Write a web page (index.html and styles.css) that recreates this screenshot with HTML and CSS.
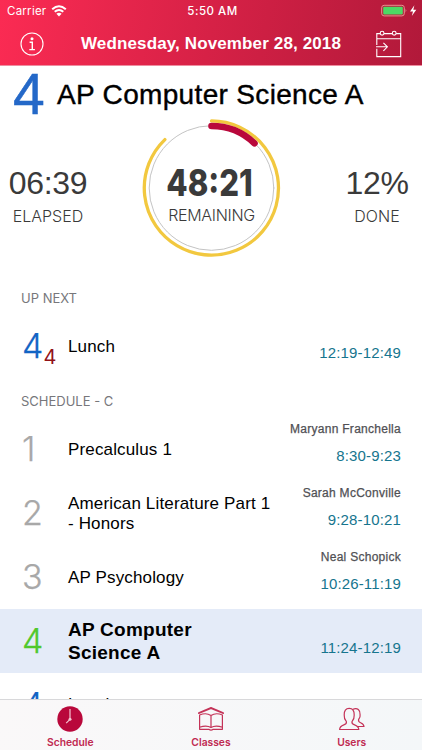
FILE: index.html
```
<!DOCTYPE html>
<html lang="en">
<head>
<meta charset="utf-8">
<title>Schedule</title>
<link rel="stylesheet" href="styles.css">
</head>
<body>
<div class="app">
  <header class="header">
    <div class="status">
      <div class="carrier"><span>Carrier</span>
        <svg width="16" height="12" viewBox="0 0 16 12" fill="none" stroke="#fff" stroke-width="2"><path d="M1.2 4.2Q8-1.8 14.8 4.2M3.7 6.8Q8 3.1 12.3 6.8"/><path d="M5.4 8.7Q8 6.6 10.6 8.7L8 11.4Z" fill="#fff" stroke="none"/></svg>
      </div>
      <div class="clock">5:50 AM</div>
      <div class="battery">
        <svg width="40" height="14" viewBox="0 0 40 14"><rect x=".7" y="1.3" width="22.6" height="10.6" rx="2.4" fill="none" stroke="#e5938f"/><rect x="2.2" y="2.8" width="19.6" height="7.6" rx="1" fill="#4cd964"/><path d="M24.6 4.8q1.6 1.8 0 3.6z" fill="#e5938f"/><path d="M33.4 1.2L29 7.4h3L30.8 12 35.3 5.8h-3z" fill="#fff"/></svg>
      </div>
    </div>
    <div class="nav">
      <svg width="24" height="24" viewBox="0 0 24 24" fill="none" stroke="#fff"><circle cx="12" cy="12" r="11" stroke-width="1.1"/><circle cx="12" cy="6.8" r="1.5" fill="#fff" stroke="none"/><path d="M9.6 10.2h2.7v7.3M9.3 17.6h5.6" stroke-width="1.4"/></svg>
      <h1>Wednesday, November 28, 2018</h1>
      <svg width="28" height="28" viewBox="0 0 28 28" fill="none" stroke="#fff" stroke-width="1.1"><path d="M1.8 15V3.6h3.4M9 3.6h8.3M21.1 3.6h4.6v23H1.8v-7.8M1.8 8.8h23.9"/><circle cx="7.1" cy="3.2" r="1.9"/><circle cx="19.2" cy="3.2" r="1.9"/><path d="M1 16.8h11M8.4 12.8l4 4-4 4"/></svg>
    </div>
  </header>

  <section class="current">
    <div class="title"><span class="period">4</span><h2>AP Computer Science A</h2></div>
    <div class="stats">
      <div class="stat elapsed"><b>06:39</b><span>ELAPSED</span></div>
      <div class="ring">
        <svg width="140" height="140" viewBox="-69.5 -70 140 140" fill="none" stroke-linecap="round"><circle r="62.3" stroke="#c4c4c4"/><path d="M0-67.1A67.1 67.1 0 1 1-46.6-48.4" stroke="#f2c83f" stroke-width="3.3"/><path d="M0-62A62 62 0 0 1 43-44.7" stroke="#b9083b" stroke-width="6.6"/></svg>
        <div class="stat remaining"><b>48:21</b><span>REMAINING</span></div>
      </div>
      <div class="stat done"><b>12%</b><span>DONE</span></div>
    </div>
  </section>

  <main class="list">
    <h3 class="upnext">UP NEXT</h3>
    <div class="row next"><div class="num blue">4<sub>4</sub></div><div class="name">Lunch</div><div class="info"><time>12:19-12:49</time></div></div>
    <h3 class="sched">SCHEDULE - C</h3>
    <div class="row"><div class="num">1</div><div class="name">Precalculus 1</div><div class="info"><span>Maryann Franchella</span><time>8:30-9:23</time></div></div>
    <div class="row"><div class="num">2</div><div class="name">American Literature Part 1<br>- Honors</div><div class="info"><span>Sarah McConville</span><time>9:28-10:21</time></div></div>
    <div class="row"><div class="num">3</div><div class="name">AP Psychology</div><div class="info"><span>Neal Schopick</span><time>10:26-11:19</time></div></div>
    <div class="row active"><div class="num green">4</div><div class="name">AP Computer<br>Science A</div><div class="info"><time>11:24-12:19</time></div></div>
    <div class="row last"><div class="num blue">4</div><div class="name">Lunch</div></div>
  </main>

  <nav class="tabs">
    <div class="tab"><svg width="28" height="28" viewBox="0 0 28 28"><circle cx="14" cy="14" r="12.7" fill="#b9083b"/><path d="M14 4v10.3l-3.8 3.8" fill="none" stroke="#f3c4d0" stroke-width="1.2"/><circle cx="14" cy="14.2" r="1.5" fill="#f3c4d0"/></svg><span>Schedule</span></div>
    <div class="tab"><svg width="28" height="28" viewBox="0 0 28 28" fill="none" stroke="#c43358" stroke-width="1.2" stroke-linejoin="round"><path d="M1.7 9V7.9L14 2.6l12.3 5.3V9M1.7 8.5L14 3.5l12.3 5M14 10.5C11 8.5 6 8.6 2.6 10v14.3h9.2q2.2 1.5 4.4 0h9.2V10C22 8.6 17 8.5 14 10.5zM14 10.5v12M2.6 22.2c4-1.4 8.8-1.4 11.4.4 2.6-1.8 7.4-1.8 11.4-.4"/></svg><span>Classes</span></div>
    <div class="tab"><svg width="28" height="28" viewBox="0 0 28 28" fill="none" stroke="#c43358" stroke-width="1.2" stroke-linejoin="round"><path d="M1.6 24.5c.2-3 1.8-3.7 4.2-4.6 2.4-.8 3-1.6 2.6-3.3C6.6 14.6 6 12.5 6.2 10c-.2-4.2 1.6-6.6 5-6.6s5.2 2.4 5 6.6c.2 2.5-.4 4.6-2.2 6.6-.4 1.7.2 2.5 2.6 3.3 2.4.9 4 1.6 4.2 4.6z"/><path d="M14.5 4.5c5-2.4 8 .8 7.6 5.3.3 1.7-.2 3.3-1.5 4.7-.4 1.7 0 2.5 2 3.2 2 .8 3.2 1.5 3.4 3.8h-6.4"/></svg><span>Users</span></div>
  </nav>
</div>
</body>
</html>
```
FILE: styles.css
```
* { box-sizing: border-box; }
body { margin: 0; background: #fff; font-family: "Liberation Sans", Arial, sans-serif; }
h1, h2, h3 { margin: 0; font-weight: 400; }
svg { display: block; flex: none; }
.app { width: 422px; height: 750px; overflow: hidden; display: flex; flex-direction: column; white-space: nowrap; }

.header { height: 66px; flex: none; color: #fff; background: linear-gradient(100deg, #fb2b53 0%, #d62146 50%, #b1193a 100%); border-bottom: 1px solid #ee8da0; }
.status { height: 22px; display: grid; grid-template-columns: 1fr auto 1fr; align-items: center; padding: 0 1px 0 7px; font: 11.5px/22px Inter, sans-serif; }
.carrier { display: flex; align-items: center; gap: 5px; letter-spacing: .25px; }
.clock { font-weight: 500; letter-spacing: .5px; margin-left: -3px; }
.battery { justify-self: end; }
.nav { height: 43px; display: flex; align-items: center; justify-content: space-between; padding: 0 19px 0 20px; }
.nav h1 { font-size: 17px; font-weight: 700; line-height: 43px; letter-spacing: .13px; padding-left: 3px; }

.current { height: 215px; flex: none; }
.title { display: flex; height: 55px; padding-left: 13px; }
.period { width: 44px; font-size: 57px; line-height: 57px; color: #2468c8; -webkit-text-stroke: .5px #2468c8; }
.title h2 { font-size: 28px; line-height: 57px; letter-spacing: .33px; -webkit-text-stroke: .4px #000; }
.stats { display: flex; justify-content: space-between; margin-top: -3px; height: 140px; }
.stat { display: flex; flex-direction: column; align-items: center; font-family: Inter, sans-serif; color: #3a3a3a; }
.stat b { font: 400 32px/38px "Liberation Sans", Arial, sans-serif; letter-spacing: -.3px; padding-bottom: 2px; }
.stat span { font-size: 16px; line-height: 24px; font-weight: 300; }
.elapsed, .done { width: 96px; padding-top: 46px; }
.done { width: 90px; }
.ring { width: 140px; display: grid; margin-left: -5px; }
.ring > * { grid-area: 1 / 1; }
.remaining { padding-top: 45px; }
.stat.remaining b { font: 800 37px/40px Inter, sans-serif; padding-bottom: 0; letter-spacing: 0; transform: translateX(-2px) scaleX(.84); }
.remaining span { letter-spacing: -.3px; }

.list { flex: 1; min-height: 0; overflow: hidden; }
.list h3 { font: 13px/20px Inter, sans-serif; color: #77777b; padding-left: 21px; }
.upnext { padding-top: 7px; height: 33px; }
.sched { padding-top: 13px; height: 38.5px; }
.row { height: 64px; display: flex; align-items: center; padding: 0 21px; }
.num { width: 47px; padding-left: 1px; font: 300 34px/40px Inter, sans-serif; color: #a8a8a8; -webkit-text-stroke: .25px currentColor; display: flex; align-items: center; }
.num sub { font-size: 20px; font-weight: 400; line-height: 20px; margin-top: 22px; color: #911218; -webkit-text-stroke: 0; }
.blue { color: #1264c4; }
.green { color: #50c82d; }
.name { flex: 1; font-size: 17px; line-height: 20px; letter-spacing: .15px; padding-top: 2px; color: #000; }
.next .name { padding-top: 1px; }
.last .name { padding-top: 0; }
.active { background: #e4ebf8; }
.active .name { font-size: 19px; font-weight: 700; line-height: 23px; letter-spacing: .25px; padding-top: 1px; }
.info { height: 64px; display: flex; flex-direction: column; justify-content: flex-end; align-items: flex-end; padding-bottom: 14px; }
.info span { font-size: 12px; line-height: 16px; margin-bottom: 8px; color: #505054; letter-spacing: .27px; -webkit-text-stroke: .25px #505054; }
.info time { font-size: 15px; line-height: 22px; letter-spacing: .15px; color: #16758e; }

.tabs { height: 51px; flex: none; display: grid; grid-template-columns: repeat(3, 1fr); background: linear-gradient(100deg, #faf8f9, #f4f7f9); border-top: 1px solid #d8d8da; }
.tab { display: flex; flex-direction: column; align-items: center; padding-top: 5px; font: 600 10.3px/19px Inter, sans-serif; color: #c02a52; }
```
